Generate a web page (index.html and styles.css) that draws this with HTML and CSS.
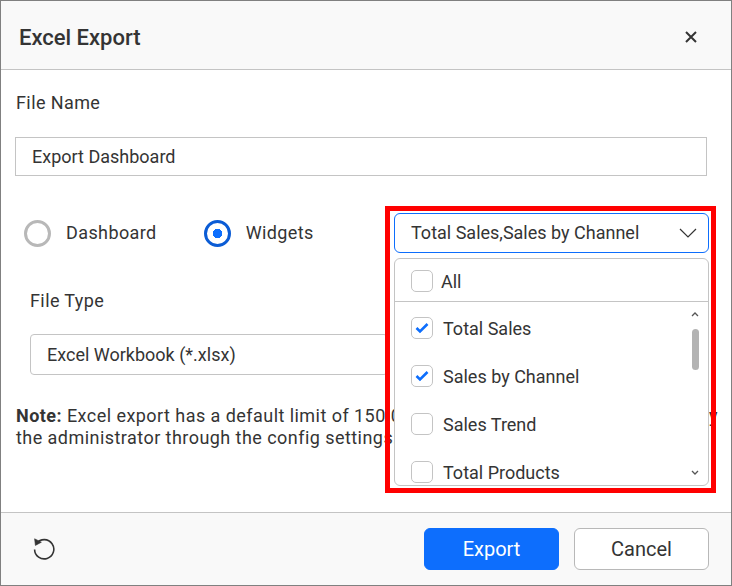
FILE: index.html

```html
<!doctype html>
<html lang="en">
  <head>
    <meta charset="UTF-8" />
    <meta name="viewport" content="width=device-width, initial-scale=1.0" />
    <title>Excel Export</title>
    <link rel="stylesheet" href="styles.css">
  </head>
  <body>
    <div class="dialog">
      <div class="dialog-header">
        <span class="dialog-title">Excel Export</span>
        <svg class="close-icon" width="12" height="12" viewBox="0 0 12 12">
          <path d="M1 1L11 11M11 1L1 11" />
        </svg>
      </div>

      <div class="dialog-body">
        <label class="field-label file-name">File Name</label>
        <div class="text-box">Export Dashboard</div>

        <div class="radio-row">
          <span class="radio"></span>
          <span class="radio-text">Dashboard</span>
          <span class="radio radio-on"></span>
          <span class="radio-text">Widgets</span>
        </div>

        <div class="file-type">
          <label class="field-label">File Type</label>
          <div class="select-box">Excel Workbook (*.xlsx)</div>
        </div>

        <p class="note"><b>Note:</b> Excel export has a default limit of 150 000 rows. This limit can be changed by<br>the administrator through the config settings.</p>
      </div>

      <div class="dialog-footer">
        <svg class="reset-icon" width="24" height="24" viewBox="0 0 24 24">
          <path d="M4.6 7.4A9.6 9.6 0 1 1 2.6 13.4" />
          <path class="reset-arrow" d="M2.6 2.8L9.4 6.2L3.4 9.4Z" />
        </svg>
        <button class="btn btn-primary">Export</button>
        <button class="btn">Cancel</button>
      </div>
    </div>

    <!-- dropdown lies over the form, red box is the highlight round it -->
    <div class="highlight">
      <div class="combo">
        <span>Total Sales,Sales by Channel</span>
        <svg width="18" height="10" viewBox="0 0 18 10">
          <path d="M1 1L9 9L17 1" />
        </svg>
      </div>
      <div class="popup">
        <div class="popup-all">
          <span class="check"></span>
          <span>All</span>
        </div>
        <div class="popup-list">
          <div class="popup-item">
            <span class="check">
              <svg width="14" height="12" viewBox="0 0 14 12"><path d="M1.5 6L5 9.5L12.5 2" /></svg>
            </span>
            <span>Total Sales</span>
          </div>
          <div class="popup-item">
            <span class="check">
              <svg width="14" height="12" viewBox="0 0 14 12"><path d="M1.5 6L5 9.5L12.5 2" /></svg>
            </span>
            <span>Sales by Channel</span>
          </div>
          <div class="popup-item">
            <span class="check"></span>
            <span>Sales Trend</span>
          </div>
          <div class="popup-item">
            <span class="check"></span>
            <span>Total Products</span>
          </div>
          <div class="scrollbar">
            <svg width="8" height="5" viewBox="0 0 8 5"><path d="M1 4L4 1L7 4" /></svg>
            <span class="scroll-thumb"></span>
            <svg class="scroll-down" width="8" height="5" viewBox="0 0 8 5"><path d="M1 1L4 4L7 1" /></svg>
          </div>
        </div>
      </div>
    </div>
  </body>
</html>
```

FILE: styles.css

```css
* {
  box-sizing: border-box;
}

body {
  margin: 0;
  font-family: "Roboto", sans-serif;
  font-size: 18px;
  color: #343434;
  background-color: #fff;
}

.dialog {
  width: 732px;
  height: 586px;
  border: 1px solid #808080;
  display: flex;
  flex-direction: column;
}

.dialog-header {
  height: 69px;
  padding: 4px 34px 0 18px;
  background-color: #f9f9f9;
  border-bottom: 1px solid #c4c4c4;
  display: flex;
  justify-content: space-between;
  align-items: center;
}

.dialog-title {
  font-size: 22px;
  font-weight: 500;
}

.close-icon path {
  fill: none;
  stroke: #343434;
  stroke-width: 2;
}

.dialog-body {
  flex: 1;
  padding: 21px 24px 0 14px;
}

.field-label {
  display: block;
  line-height: 24px;
  letter-spacing: 0.4px;
}

.file-name {
  margin-left: 1px;
}

.text-box {
  height: 39px;
  margin-top: 22px;
  padding-left: 16px;
  line-height: 37px;
  border: 1px solid #c4c4c4;
}

.radio-row {
  margin: 43px 0 0 9px;
  height: 28px;
  display: flex;
  align-items: center;
  letter-spacing: 0.4px;
}

.radio {
  width: 27px;
  height: 27px;
  border: 3px solid #b8b8b8;
  border-radius: 50%;
  flex-shrink: 0;
}

.radio-on {
  border-color: #0b5cd5;
  background: radial-gradient(circle, #0d6efd 0 4.5px, transparent 5px);
}

.radio-text {
  margin: 0 47px 2px 15px;
}

.file-type {
  margin: 42px 0 0 15px;
}

.select-box {
  width: 358px;
  height: 41px;
  margin-top: 21px;
  padding-left: 16px;
  line-height: 39px;
  border: 1px solid #c4c4c4;
  border-radius: 4px;
}

.note {
  margin: 30px 0 0 1px;
  line-height: 22px;
  letter-spacing: 0.45px;
  white-space: nowrap;
}

.dialog-footer {
  height: 73px;
  padding: 0 22px 0 31px;
  background-color: #f9f9f9;
  border-top: 1px solid #c4c4c4;
  display: flex;
  align-items: center;
  gap: 15px;
}

.reset-icon {
  margin: 0 auto 2px 0;
}

.reset-icon path {
  fill: none;
  stroke: #343434;
  stroke-width: 1.6;
}

.reset-icon .reset-arrow {
  fill: #343434;
  stroke-width: 0.6;
}

.btn {
  width: 135px;
  height: 42px;
  font-family: inherit;
  font-size: 20px;
  color: #343434;
  background-color: #fff;
  border: 1px solid #b8b8b8;
  border-radius: 6px;
}

.btn-primary {
  color: #fff;
  background-color: #0d6efd;
  border-color: #0d6efd;
}

/* no background here, the note text shows in the gap inside the red line */
.highlight {
  position: absolute;
  left: 385px;
  top: 206px;
  width: 331px;
  height: 287px;
  padding: 2px 2px 0 4px;
  border: 5px solid #ff0000;
}

.combo {
  width: 315px;
  height: 40px;
  padding: 0 11px 0 16px;
  border: 1px solid #0d6efd;
  border-radius: 6px;
  background-color: #fff;
  display: flex;
  justify-content: space-between;
  align-items: center;
}

.combo span {
  margin-bottom: 1px;
}

.combo path {
  fill: none;
  stroke: #343434;
  stroke-width: 1.2;
}

.popup {
  width: 315px;
  height: 228px;
  margin-top: 5px;
  border: 1px solid #c4c4c4;
  border-radius: 6px;
  background-color: #fff;
  overflow: hidden;
}

.popup-all {
  height: 43px;
  padding: 2px 0 0 16px;
  border-bottom: 1px solid #c4c4c4;
  display: flex;
  align-items: center;
  gap: 8px;
}

.popup-list {
  height: 183px;
  padding-top: 2px;
  position: relative;
  overflow: hidden;
}

.popup-item {
  height: 48px;
  padding-left: 16px;
  display: flex;
  align-items: center;
  gap: 10px;
}

.check {
  width: 22px;
  height: 22px;
  border: 1px solid #c4c4c4;
  border-radius: 5px;
  flex-shrink: 0;
  display: flex;
  justify-content: center;
  align-items: center;
}

.check path {
  fill: none;
  stroke: #0d6efd;
  stroke-width: 2.6;
}

.scrollbar {
  position: absolute;
  right: 9px;
  top: 10px;
  bottom: 10px;
  width: 8px;
  display: flex;
  flex-direction: column;
  align-items: center;
}

.scrollbar path {
  fill: none;
  stroke: #555;
  stroke-width: 1.3;
}

.scroll-thumb {
  width: 7px;
  height: 41px;
  margin-top: 12px;
  border-radius: 4px;
  background-color: #b3b3b3;
}

.scroll-down {
  margin-top: auto;
}
```
